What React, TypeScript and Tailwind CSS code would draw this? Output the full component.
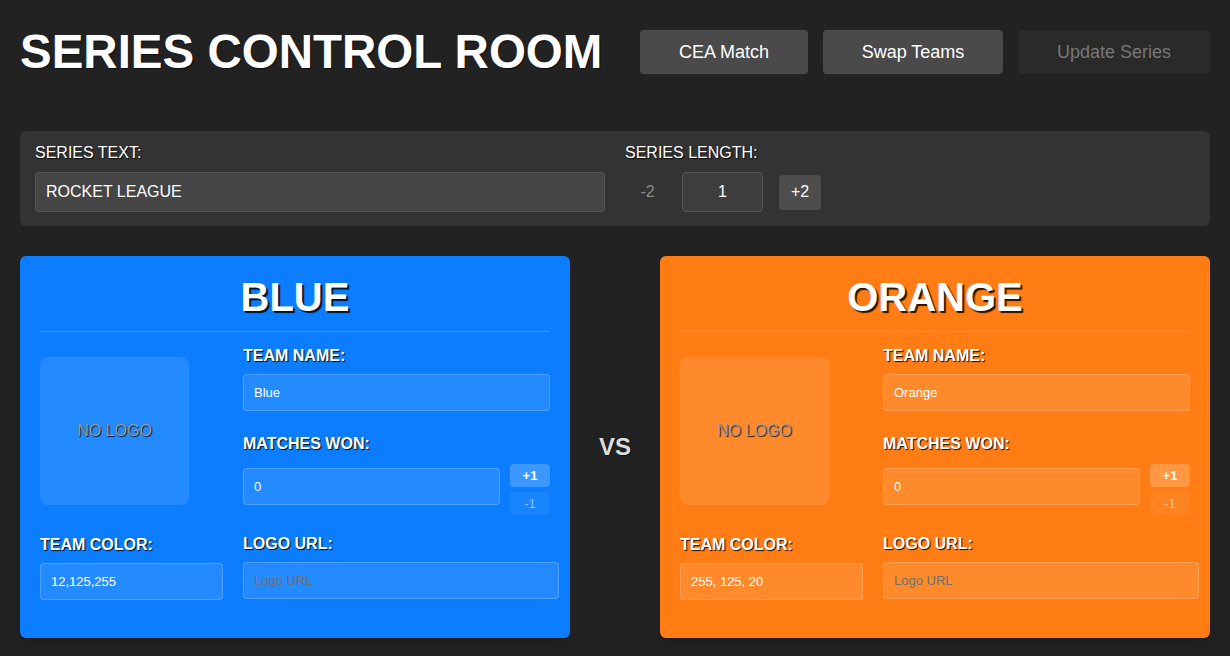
import { useState } from "react";

interface Team {
  key: string;
  title: string;
  name: string;
  color: string;
  bg: string;
}

const teams: Team[] = [
  { key: "blue", title: "BLUE", name: "Blue", color: "12,125,255", bg: "bg-[#0c7dff]" },
  { key: "orange", title: "ORANGE", name: "Orange", color: "255, 125, 20", bg: "bg-[#ff7d14]" },
];

const label = "block text-[16px] leading-[18px] font-bold text-white [text-shadow:1px_1px_1px_rgba(0,0,0,0.9)]";
const field =
  "h-[37px] rounded-[4px] border border-white/20 bg-white/10 px-[10px] text-[13px] text-white outline-none placeholder:text-[#6f6f6f]";

function TeamCard({ team }: { team: Team }) {
  const [wins, setWins] = useState(0);

  return (
    <div className={`w-[550px] shrink-0 rounded-[6px] px-[20px] pt-[18px] pb-[38px] shadow-lg ${team.bg}`}>
      <h2 className="border-b border-white/20 pb-[11px] text-center text-[40px] leading-[46px] font-bold text-white [text-shadow:2px_2px_1px_rgba(0,0,0,0.85)]">
        {team.title}
      </h2>

      <div className="mt-[15px] grid grid-cols-[183px_minmax(0,1fr)] gap-x-[20px] gap-y-[21px]">
        <div className="flex items-center">
          <div className="flex h-[148px] w-[149px] items-center justify-center rounded-[8px] bg-white/10 text-[16px] text-[#9a9a9a] [text-shadow:1px_1px_1px_rgba(0,0,0,0.8)]">
            NO LOGO
          </div>
        </div>

        <div>
          <label className={label}>TEAM NAME:</label>
          <input className={`${field} mt-[9px] w-full`} defaultValue={team.name} />

          <label className={`${label} mt-[24px]`}>MATCHES WON:</label>
          <div className="mt-[11px] flex items-start gap-[10px]">
            <input className={`${field} mt-[4px] min-w-0 flex-1`} value={wins} onChange={() => {}} />
            <div className="flex flex-col gap-[5px]">
              <button
                onClick={() => setWins(wins + 1)}
                className="h-[23px] w-[40px] rounded-[4px] bg-white/20 text-[13px] font-bold text-white"
              >
                +1
              </button>
              <button
                onClick={() => setWins(Math.max(0, wins - 1))}
                className="h-[23px] w-[40px] rounded-[4px] bg-white/5 text-[13px] text-white/50"
              >
                -1
              </button>
            </div>
          </div>
        </div>

        <div>
          <label className={label}>TEAM COLOR:</label>
          <input className={`${field} mt-[9px] w-[183px]`} defaultValue={team.color} />
        </div>

        <div>
          <label className={`${label} -mt-[1px]`}>LOGO URL:</label>
          <input className={`${field} mt-[9px] w-[316px]`} placeholder="Logo URL" />
        </div>
      </div>
    </div>
  );
}

export default function App() {
  const [length, setLength] = useState(1);

  return (
    <div className="min-h-[656px] bg-[#222222] px-[20px] pt-[24px] pb-[18px] font-['Liberation_Sans',Arial,sans-serif] text-white">
      <header className="flex h-[56px] items-center justify-between">
        <h1 className="text-[47.5px] leading-[56px] font-bold text-white [text-shadow:1px_1px_1px_rgba(0,0,0,0.6)]">
          SERIES CONTROL ROOM
        </h1>
        <div className="flex items-center gap-[15px]">
          <button className="h-[44px] w-[168px] rounded-[4px] bg-[#4a4a4a] text-[18px] text-white">CEA Match</button>
          <button className="h-[44px] w-[180px] rounded-[4px] bg-[#4a4a4a] text-[18px] text-white">Swap Teams</button>
          <button className="h-[44px] w-[192px] rounded-[4px] bg-[#2a2a2a] text-[18px] text-[#777777]">Update Series</button>
        </div>
      </header>

      <section className="mt-[51px] flex gap-[20px] rounded-[6px] bg-[#333333] px-[15px] pt-[13px] pb-[14px]">
        <div className="w-[570px]">
          <label className="block text-[16px] leading-[18px] text-white [text-shadow:1px_1px_1px_rgba(0,0,0,0.8)]">SERIES TEXT:</label>
          <input
            className="mt-[10px] h-[40px] w-full rounded-[4px] border border-[#555555] bg-[#454545] px-[10px] text-[16px] text-white outline-none"
            defaultValue="ROCKET LEAGUE"
          />
        </div>
        <div>
          <label className="block text-[16px] leading-[18px] text-white [text-shadow:1px_1px_1px_rgba(0,0,0,0.8)]">SERIES LENGTH:</label>
          <div className="mt-[10px] flex items-center gap-[15px]">
            <button
              onClick={() => setLength(Math.max(1, length - 2))}
              className="h-[35px] w-[45px] rounded-[4px] text-[16px] text-[#8a8a8a]"
            >
              -2
            </button>
            <input
              className="-ml-[3px] h-[40px] w-[81px] rounded-[4px] border border-[#555555] bg-[#3d3d3d] text-center text-[16px] text-white outline-none"
              value={length}
              onChange={() => {}}
            />
            <button
              onClick={() => setLength(length + 2)}
              className="ml-[1px] h-[35px] w-[42px] rounded-[4px] bg-[#4d4d4d] text-[16px] text-white"
            >
              +2
            </button>
          </div>
        </div>
      </section>

      <main className="mt-[30px] flex items-stretch">
        <TeamCard team={teams[0]} />
        <div className="flex w-[90px] shrink-0 items-center justify-center text-[24px] font-bold text-[#dddddd] [text-shadow:1px_1px_1px_rgba(0,0,0,0.6)]">
          VS
        </div>
        <TeamCard team={teams[1]} />
      </main>
    </div>
  );
}
